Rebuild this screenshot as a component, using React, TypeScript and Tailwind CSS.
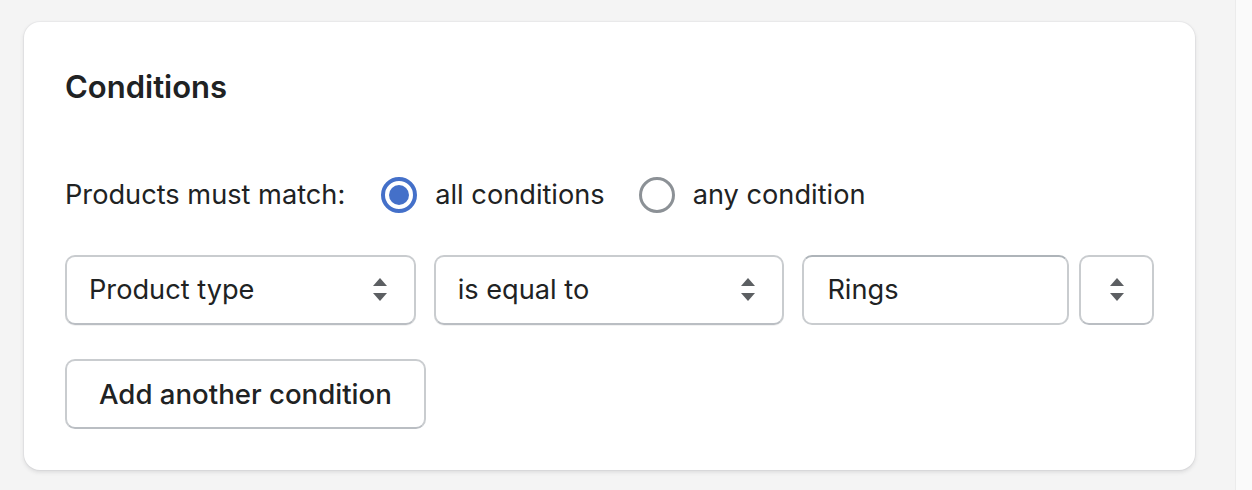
import React from "react";

const font = { fontFamily: "Inter, 'Noto Sans', sans-serif" };

const Arrows = () => (
  <svg width="16" height="26" viewBox="0 0 16 26" className="shrink-0">
    <path d="M8 1 L15 9 L1 9 Z" fill="#5c5f62" />
    <path d="M1 16 L15 16 L8 24 Z" fill="#5c5f62" />
  </svg>
);

const Select = ({ label, width }: { label: string; width: string }) => (
  <div
    className={`${width} h-[70px] flex items-center justify-between pl-[22px] pr-[26px] bg-white border-2 border-[#c9cccf] border-b-[#babec3] rounded-[10px] shadow-[0_1px_0_rgba(0,0,0,0.05)]`}
  >
    <span className="text-[27.2px] leading-[36px] text-[#202223]">{label}</span>
    <Arrows />
  </div>
);

const Radio = ({ checked, label }: { checked: boolean; label: string }) => (
  <label className="flex items-center gap-[18px]">
    {checked ? (
      <span className="w-9 h-9 rounded-full border-4 border-[#4470c9] flex items-center justify-center">
        <span className="w-5 h-5 rounded-full bg-[#4470c9]" />
      </span>
    ) : (
      <span className="w-9 h-9 rounded-full border-[3px] border-[#8c9196]" />
    )}
    <span className="text-[27.2px] leading-[36px] text-[#202223]">{label}</span>
  </label>
);

export default function App() {
  return (
    <div className="w-[1252px] h-[490px] flex bg-[#f4f4f4] overflow-hidden" style={font}>
      <div className="w-[1235px] pl-6 pt-[22px] pr-10">
        <div className="w-[1171px] bg-white rounded-2xl shadow-[0_0_0_1px_rgba(63,63,68,0.04),0_2px_4px_rgba(63,63,68,0.15)] px-[41px] pt-[48px] pb-[41px]">
          <h2 className="text-[31px] font-semibold text-[#202223] leading-[34px]">Conditions</h2>
          <div className="mt-[73px] flex items-center gap-[36px]">
            <span className="text-[27.2px] leading-[36px] text-[#202223]">Products must match:</span>
            <div className="flex items-center gap-[34px]">
              <Radio checked label="all conditions" />
              <Radio checked={false} label="any condition" />
            </div>
          </div>
          <div className="mt-[42px] flex items-center gap-[18px]">
            <Select label="Product type" width="w-[352px]" />
            <Select label="is equal to" width="w-[352px]" />
            <div className="w-[268px] h-[70px] flex items-center pl-[23px] bg-white border-2 border-[#c9cccf] border-t-[#aeb4b9] rounded-[10px]">
              <span className="text-[27.2px] leading-[36px] text-[#202223]">Rings</span>
            </div>
            <div className="-ml-[8px] w-[75px] h-[70px] flex items-center justify-center bg-white border-2 border-[#c9cccf] border-b-[#babec3] rounded-[10px]">
              <Arrows />
            </div>
          </div>
          <button className="mt-[34px] h-[70px] px-[32px] bg-white border-2 border-[#c9cccf] border-b-[#babec3] rounded-[10px] text-[27.6px] leading-[36px] font-medium text-[#202223]">
            Add another condition
          </button>
        </div>
      </div>
      <div className="flex-1 bg-[#fafafa] border-l border-[#ebebeb]" />
    </div>
  );
}
